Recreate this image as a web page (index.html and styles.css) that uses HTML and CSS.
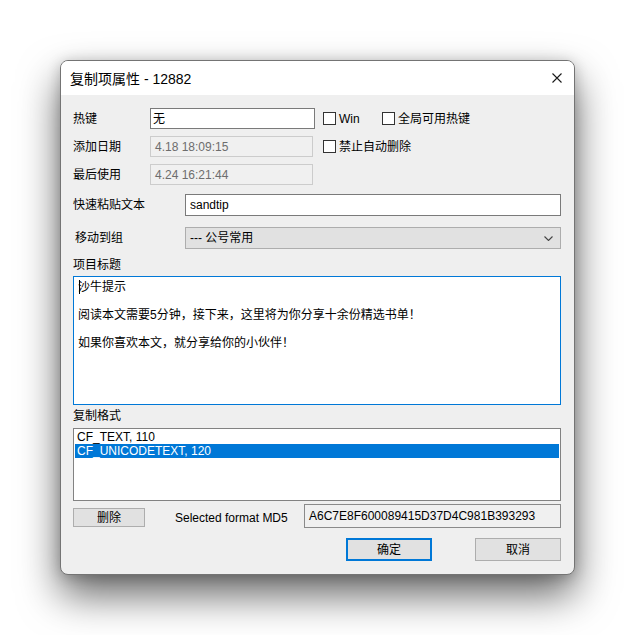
FILE: index.html
```html
<!DOCTYPE html>
<html lang="zh-CN">
<head>
<meta charset="utf-8">
<title>复制项属性 - 12882</title>
<link rel="stylesheet" href="styles.css">
</head>
<body>
<div class="window">
  <div class="titlebar">
    <span class="title">复制项属性 - 12882</span>
    <svg class="close" width="10" height="10" viewBox="0 0 10 10"><path d="M0.5 0.5 L9.5 9.5 M9.5 0.5 L0.5 9.5" stroke="#1a1a1a" stroke-width="1.1" fill="none"/></svg>
  </div>
  <div class="content">
    <div class="row r1">
      <span class="label w77">热键</span>
      <div class="edit hot">无</div>
      <label class="check first"><span class="box"></span>Win</label>
      <label class="check second"><span class="box"></span>全局可用热键</label>
    </div>
    <div class="row r2">
      <span class="label w77">添加日期</span>
      <div class="edit disabled">4.18 18:09:15</div>
      <label class="check"><span class="box"></span>禁止自动删除</label>
    </div>
    <div class="row r2">
      <span class="label w77">最后使用</span>
      <div class="edit disabled">4.24 16:21:44</div>
    </div>
    <div class="row r4">
      <span class="label w112">快速粘贴文本</span>
      <div class="edit wide">sandtip</div>
    </div>
    <div class="row r5">
      <span class="label w112 indent">移动到组</span>
      <div class="combo">
        <span>--- 公号常用</span>
        <svg class="chev" width="9" height="5" viewBox="0 0 9 5"><path d="M0.5 0.5 L4.5 4.5 L8.5 0.5" stroke="#444" stroke-width="1.1" fill="none"/></svg>
      </div>
    </div>
    <div class="caption cap1">项目标题</div>
    <div class="memo"><span class="caret"></span>沙牛提示<br><br>阅读本文需要5分钟，接下来，这里将为你分享十余份精选书单！<br><br>如果你喜欢本文，就分享给你的小伙伴！</div>
    <div class="caption cap2">复制格式</div>
    <div class="listbox">
      <div class="item">CF_TEXT, 110</div>
      <div class="item selected">CF_UNICODETEXT, 120</div>
    </div>
    <div class="row md5row">
      <div class="btn small">删除</div>
      <span class="md5label">Selected format MD5</span>
      <div class="md5">A6C7E8F600089415D37D4C981B393293</div>
    </div>
    <div class="row actions">
      <div class="btn action default">确定</div>
      <div class="btn action">取消</div>
    </div>
  </div>
</div>
</body>
</html>
```

FILE: styles.css
```css
html, body {
  margin: 0;
  padding: 0;
  background: #ffffff;
}

html {
  height: 100%;
}

body {
  min-height: 100%;
  box-sizing: border-box;
  padding: 60px 0 0 60px;
  font-family: "Liberation Sans", "Noto Sans CJK SC", sans-serif;
  font-size: 12px;
  color: #000;
}

.window {
  width: 515px;
  height: 515px;
  box-sizing: border-box;
  border: 1px solid #747474;
  border-radius: 8px;
  overflow: hidden;
  background: #efefef;
  box-shadow: 0 20px 40px rgba(0, 0, 0, 0.6), 0 2px 14px rgba(0, 0, 0, 0.2);
}

.titlebar {
  height: 34px;
  background: #ffffff;
  display: flex;
  align-items: center;
  padding-left: 9px;
}

.title {
  font-size: 14px;
  line-height: 16px;
  color: #000;
  margin-top: 1px;
}

.close {
  margin-left: auto;
  margin-right: 12px;
}

.content {
  padding: 13px 13px 0 12px;
}

.row {
  display: flex;
  align-items: center;
}

.r1 { height: 21px; }
.r2 { height: 21px; margin-top: 7px; }
.r4 { height: 22px; margin-top: 9px; }
.r5 { height: 22px; margin-top: 11px; }

.label {
  flex: none;
  line-height: 14px;
}

.w77 { width: 77px; }
.w112 { width: 112px; }
.indent { padding-left: 2px; box-sizing: border-box; }

.edit {
  box-sizing: border-box;
  height: 100%;
  border: 1px solid #7a7a7a;
  background: #fff;
  display: flex;
  align-items: center;
  padding-left: 2px;
  line-height: 14px;
}

.hot { width: 165px; }

.disabled {
  width: 163px;
  background: #f0f0f0;
  border-color: #cccccc;
  color: #6d6d6d;
  padding-left: 4px;
}

.wide {
  flex: 1;
  padding-left: 4px;
}

.check {
  display: flex;
  align-items: center;
  line-height: 14px;
  margin-left: 10px;
}

.check.first {
  margin-left: 8px;
  width: 59px;
}

.check.second {
  margin-left: 0;
}

.box {
  width: 13px;
  height: 13px;
  box-sizing: border-box;
  border: 1px solid #333;
  background: #fff;
  margin-right: 3px;
  flex: none;
}

.combo {
  flex: 1;
  height: 100%;
  box-sizing: border-box;
  border: 1px solid #adadad;
  background: #e1e1e1;
  display: flex;
  align-items: center;
  padding: 0 7px 0 4px;
  line-height: 14px;
}

.chev {
  margin-left: auto;
  margin-top: 1px;
}

.caption {
  line-height: 14px;
  height: 14px;
}

.cap1 { margin-top: 9px; }
.cap2 { margin-top: 4px; }

.memo {
  margin-top: 4px;
  height: 129px;
  box-sizing: border-box;
  border: 1px solid #0078d7;
  background: #fff;
  padding: 3px 4px;
  line-height: 14px;
}

.caret {
  display: inline-block;
  width: 1px;
  height: 14px;
  background: #000;
  vertical-align: top;
  margin-left: 1px;
  margin-right: -2px;
}

.listbox {
  margin-top: 5px;
  height: 73px;
  box-sizing: border-box;
  border: 1px solid #828282;
  background: #fff;
  padding: 1px;
}

.item {
  line-height: 14px;
  height: 14px;
  padding-left: 2px;
}

.item.selected {
  background: #0078d7;
  color: #fff;
}

.md5row {
  margin-top: 3px;
  height: 24px;
  align-items: flex-start;
}

.btn {
  box-sizing: border-box;
  border: 1px solid #adadad;
  background: #e1e1e1;
  display: flex;
  align-items: center;
  justify-content: center;
  line-height: 14px;
}

.btn.small {
  width: 72px;
  height: 19px;
  margin-top: 4px;
}

.md5label {
  margin-left: 30px;
  line-height: 14px;
  margin-top: 7px;
}

.md5 {
  margin-left: auto;
  width: 257px;
  height: 24px;
  box-sizing: border-box;
  border: 1px solid #8a8a8a;
  background: #f0f0f0;
  padding-left: 4px;
  display: flex;
  align-items: center;
  line-height: 14px;
}

.actions {
  margin-top: 10px;
  justify-content: flex-end;
  gap: 43px;
}

.btn.action {
  width: 86px;
  height: 23px;
}

.btn.default {
  border: 2px solid #0078d7;
}
```
